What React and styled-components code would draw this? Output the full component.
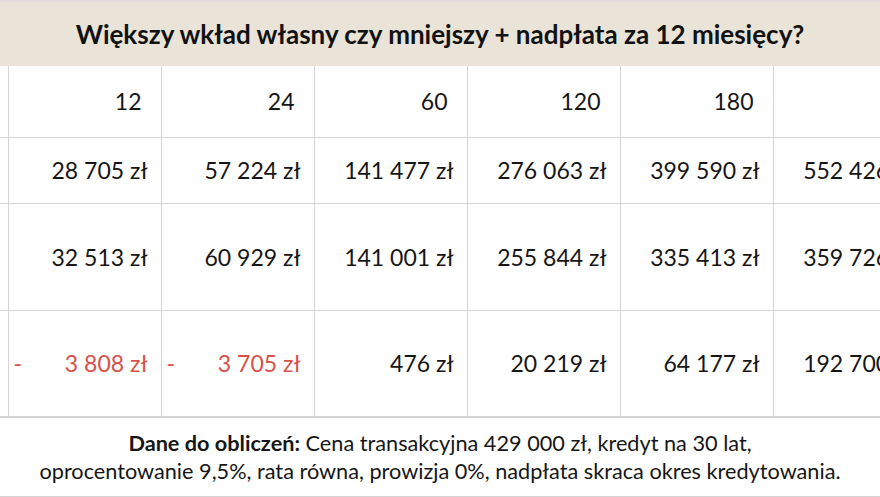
import React from "react";
import styled, { createGlobalStyle } from "styled-components";

const GlobalStyle = createGlobalStyle`
  html, body {
    margin: 0;
    padding: 0;
    background: #fff;
  }
  body {
    font-family: Lato, "Noto Sans", sans-serif;
    color: #161616;
  }
`;

const Wrapper = styled.div`
  width: 880px;
  height: 497px;
  overflow: hidden;
  border-top: 2px solid #e2dcdc;
  box-sizing: border-box;
`;

const Title = styled.div`
  height: 64px;
  display: flex;
  align-items: center;
  justify-content: center;
  background: #e9e3d8;
  font-size: 26px;
  font-weight: bold;
  color: #121212;
`;

const ScrollArea = styled.div`
  width: 100%;
  overflow: hidden;
`;

const Table = styled.table`
  border-collapse: collapse;
  table-layout: fixed;
  width: 926px;
`;

const Row = styled.tr`
  height: ${(p) => p.$h}px;
`;

const Cell = styled.td`
  border: 1px solid #d4d4d4;
  border-top: ${(p) => (p.$first ? "none" : "1px solid #d4d4d4")};
  padding: 0 ${(p) => (p.$head ? 19 : 13)}px 0 5px;
  text-align: right;
  font-size: 23px;
  white-space: nowrap;
  overflow: hidden;
  color: ${(p) => (p.$neg ? "#d6524a" : "#161616")};
  &:first-child {
    border-left: none;
    padding: 0;
  }
`;

const Amount = styled.div`
  display: flex;
  justify-content: ${(p) => (p.$neg ? "space-between" : "flex-end")};
`;

const Footer = styled.div`
  border-top: 1px solid #d4d4d4;
  border-bottom: 1px solid #d4d4d4;
  height: 80px;
  box-sizing: border-box;
  display: flex;
  flex-direction: column;
  align-items: center;
  justify-content: center;
  font-size: 21.7px;
  line-height: 28px;
  text-align: center;
`;

// the last column's header sits past the visible edge
const months = [12, 24, 60, 120, 180, ""];

const rows = [
  { h: 66, values: ["28 705 zł", "57 224 zł", "141 477 zł", "276 063 zł", "399 590 zł", "552 426 zł"] },
  { h: 107, values: ["32 513 zł", "60 929 zł", "141 001 zł", "255 844 zł", "335 413 zł", "359 726 zł"] },
  { h: 106, values: ["-3 808 zł", "-3 705 zł", "476 zł", "20 219 zł", "64 177 zł", "192 700 zł"] },
];

const widths = [8, 153, 153, 153, 153, 153, 153];

export default function App() {
  return (
    <>
      <GlobalStyle />
      <Wrapper>
        <Title>Większy wkład własny czy mniejszy + nadpłata za 12 miesięcy?</Title>
        <ScrollArea>
          <Table>
            <colgroup>
              {widths.map((w, i) => (
                <col key={i} style={{ width: w }} />
              ))}
            </colgroup>
            <tbody>
              <Row $h={71}>
                <Cell $first />
                {months.map((m, i) => (
                  <Cell key={i} $first $head>
                    {m}
                  </Cell>
                ))}
              </Row>
              {rows.map((r, i) => (
                <Row key={i} $h={r.h}>
                  <Cell />
                  {r.values.map((v, j) => {
                    const neg = v.startsWith("-");
                    return (
                      <Cell key={j} $neg={neg}>
                        <Amount $neg={neg}>
                          {neg && <span>-</span>}
                          <span>{neg ? v.slice(1) : v}</span>
                        </Amount>
                      </Cell>
                    );
                  })}
                </Row>
              ))}
            </tbody>
          </Table>
        </ScrollArea>
        <Footer>
          <div>
            <b>Dane do obliczeń:</b> Cena transakcyjna 429 000 zł, kredyt na 30 lat,
          </div>
          <div>oprocentowanie 9,5%, rata równa, prowizja 0%, nadpłata skraca okres kredytowania.</div>
        </Footer>
      </Wrapper>
    </>
  );
}
